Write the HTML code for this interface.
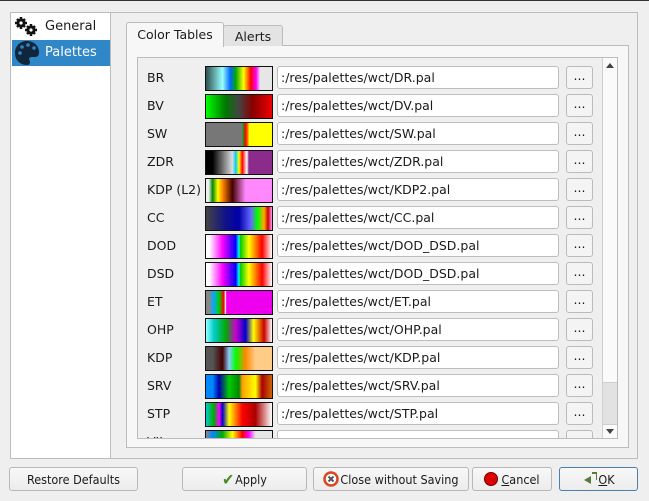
<!DOCTYPE html><html><head><style>
body{margin:0;width:649px;height:501px;background:#efefef;font-family:"DejaVu Sans","Liberation Sans",sans-serif;font-size:12.5px;color:#1a1a1a;position:relative;overflow:hidden}
.a{position:absolute;box-sizing:border-box}
.row{position:absolute;left:0;height:28px;width:470px}
.lbl{position:absolute;left:9px;top:4px}
.sw{position:absolute;left:67px;top:0;width:66px;height:23px;border:1px solid #111}
.tf{position:absolute;left:139px;top:0;width:282px;height:23px;border:1px solid #bdbdbd;border-radius:3px;background:#fff;padding:3px 0 0 3px;box-sizing:border-box}
.bt{position:absolute;left:428px;top:0;width:27px;height:23px;border:1px solid #bbb;border-radius:3px;background:#f4f4f4;text-align:center;line-height:18px;box-sizing:border-box}
.btn{position:absolute;top:467px;height:24px;border:1px solid #b8b8b8;border-radius:3px;background:linear-gradient(#f8f8f8,#ececec);box-sizing:border-box;display:flex;align-items:center;justify-content:center;white-space:nowrap;font-family:"DejaVu Sans Condensed","DejaVu Sans",sans-serif;font-size:12.5px}
</style></head><body>
<div class="a" style="left:0;top:0;width:649px;height:1px;background:#333"></div>
<div class="a" style="left:10px;top:12px;width:628px;height:447px;border:1px solid #bcbcbc"></div>
<div class="a" style="left:11px;top:13px;width:100px;height:445px;background:#fff;border-right:1px solid #bcbcbc"></div>
<div class="a" style="left:12px;top:40px;width:98px;height:26px;background:#3087c8"></div>
<svg class="a" style="left:14px;top:17px" width="26" height="20" viewBox="0 0 26 20"><g fill="#111"><circle cx="7" cy="6" r="4.5"/><circle cx="17" cy="13" r="4.5"/><g stroke="#111" stroke-width="2.5"><path d="M7 0v12M1 6h12M3 2l8 8M11 2l-8 8M17 7v12M11 13h12M13 9l8 8M21 9l-8 8"/></g></g><circle cx="7" cy="6" r="1.6" fill="#fff"/><circle cx="17" cy="13" r="1.6" fill="#fff"/></svg>
<div class="a" style="left:45px;top:19px;font-size:13px">General</div>
<svg class="a" style="left:14px;top:40px" width="26" height="26" viewBox="0 0 26 26"><path d="M13 1C6 1 1 6 1 13s5 12 12 12c2 0 3-1 3-3 0-1.5-1-2-1-3 0-1 1-2 2.5-2H21c3 0 4-2 4-5C25 6 20 1 13 1z" fill="#10263a"/><g fill="#3087c8"><circle cx="6" cy="13" r="1.8"/><circle cx="8" cy="7" r="1.8"/><circle cx="14" cy="5" r="1.8"/><circle cx="20" cy="8" r="1.8"/></g></svg>
<div class="a" style="left:45px;top:45px;font-size:13px;color:#fff">Palettes</div>
<div class="a" style="left:126px;top:45px;width:503px;height:403px;border:1px solid #bcbcbc;background:#f7f7f7"></div>
<div class="a" style="left:223px;top:25px;width:60px;height:21px;border:1px solid #bcbcbc;border-bottom:none;border-radius:3px 3px 0 0;background:#e3e3e3;text-align:center;line-height:21px">Alerts</div>
<div class="a" style="left:126px;top:22px;width:98px;height:25px;border:1px solid #bcbcbc;border-bottom:none;border-radius:3px 3px 0 0;background:#f7f7f7;text-align:center;line-height:24px">Color Tables</div>
<div class="a" style="left:137px;top:57px;width:481px;height:382px;border:1px solid #bcbcbc;background:#efefef;overflow:hidden">
<div class="a" style="left:0;top:8px;width:470px;height:380px">
<div class="row" style="top:0"><span class="lbl">BR</span><div class="sw" style="background:linear-gradient(90deg,#2f4f4f,#9ff 25%,#06f 37%,#0a0 45%,#ff0 57%,#f00 68%,#f0f 76%,#e6e6e6 82%,#e6e6e6)"></div><div class="tf">:/res/palettes/wct/DR.pal</div><div class="bt">...</div></div>
<div class="row" style="top:28px"><span class="lbl">BV</span><div class="sw" style="background:linear-gradient(90deg,#0f0,#070 30%,#444 50%,#800 70%,#e00)"></div><div class="tf">:/res/palettes/wct/DV.pal</div><div class="bt">...</div></div>
<div class="row" style="top:56px"><span class="lbl">SW</span><div class="sw" style="background:linear-gradient(90deg,#777 55%,#0a0 56%,#f00 60%,#f80 64%,#ff0 65%)"></div><div class="tf">:/res/palettes/wct/SW.pal</div><div class="bt">...</div></div>
<div class="row" style="top:84px"><span class="lbl">ZDR</span><div class="sw" style="background:linear-gradient(90deg,#000 10%,#ddd 40%,#0cf 45%,#ff0 50%,#f00 55%,#fff 62%,#8b2b8b 65%)"></div><div class="tf">:/res/palettes/wct/ZDR.pal</div><div class="bt">...</div></div>
<div class="row" style="top:112px"><span class="lbl">KDP (L2)</span><div class="sw" style="background:linear-gradient(90deg,#eee 4%,#080 10%,#ff0 18%,#f80 25%,#400 40%,#f8f 60%)"></div><div class="tf">:/res/palettes/wct/KDP2.pal</div><div class="bt">...</div></div>
<div class="row" style="top:140px"><span class="lbl">CC</span><div class="sw" style="background:linear-gradient(90deg,#444,#118 30%,#00a 50%,#66f 68%,#0f0 78%,#fa0 88%,#c00 94%,#f9f)"></div><div class="tf">:/res/palettes/wct/CC.pal</div><div class="bt">...</div></div>
<div class="row" style="top:168px"><span class="lbl">DOD</span><div class="sw" style="background:linear-gradient(90deg,#fff 5%,#f0f 25%,#00f 45%,#0ff 50%,#0c0 52%,#ff0 65%,#f00 85%,#fff)"></div><div class="tf">:/res/palettes/wct/DOD_DSD.pal</div><div class="bt">...</div></div>
<div class="row" style="top:196px"><span class="lbl">DSD</span><div class="sw" style="background:linear-gradient(90deg,#fff 5%,#f0f 25%,#00f 45%,#0ff 50%,#0c0 52%,#ff0 65%,#f00 85%,#fff)"></div><div class="tf">:/res/palettes/wct/DOD_DSD.pal</div><div class="bt">...</div></div>
<div class="row" style="top:224px"><span class="lbl">ET</span><div class="sw" style="background:linear-gradient(90deg,#888 5%,#0af 12%,#0c0 20%,#f00 27%,#fff 30%,#e0e 31%)"></div><div class="tf">:/res/palettes/wct/ET.pal</div><div class="bt">...</div></div>
<div class="row" style="top:252px"><span class="lbl">OHP</span><div class="sw" style="background:linear-gradient(90deg,#9ff,#0cc 12%,#0a0 30%,#c0c 45%,#00c 60%,#ff0 72%,#c00 88%,#fff)"></div><div class="tf">:/res/palettes/wct/OHP.pal</div><div class="bt">...</div></div>
<div class="row" style="top:280px"><span class="lbl">KDP</span><div class="sw" style="background:linear-gradient(90deg,#555 10%,#400 25%,#8cf 35%,#0f0 45%,#f80 60%,#fc8 75%)"></div><div class="tf">:/res/palettes/wct/KDP.pal</div><div class="bt">...</div></div>
<div class="row" style="top:308px"><span class="lbl">SRV</span><div class="sw" style="background:linear-gradient(90deg,#08f 10%,#00a 20%,#0c0 35%,#080 50%,#ffa000 55%,#ff0 75%,#a00 85%,#c60)"></div><div class="tf">:/res/palettes/wct/SRV.pal</div><div class="bt">...</div></div>
<div class="row" style="top:336px"><span class="lbl">STP</span><div class="sw" style="background:linear-gradient(90deg,#0cc,#0a0 12%,#f0f 20%,#00c 25%,#ff0 35%,#f00 55%,#a00 75%,#fff)"></div><div class="tf">:/res/palettes/wct/STP.pal</div><div class="bt">...</div></div>
<div class="row" style="top:364px"><span class="lbl">VIL</span><div class="sw" style="background:linear-gradient(90deg,#888,#08f 10%,#0a0 25%,#ff0 40%,#f00 55%,#f0f 65%,#e6e6e6 75%)"></div><div class="tf"></div><div class="bt">...</div></div>
</div>
<div class="a" style="left:464px;top:0;width:16px;height:380px;border-left:1px solid #cfcfcf;background:#fafafa"></div>
<div class="a" style="left:464px;top:324px;width:16px;height:43px;background:#e2e2e2;border:1px solid #cfcfcf"></div>
<div class="a" style="left:468px;top:5px;width:0;height:0;border:4px solid transparent;border-bottom:5px solid #444;border-top:none"></div>
<div class="a" style="left:468px;top:371px;width:0;height:0;border:4px solid transparent;border-top:5px solid #444;border-bottom:none"></div>
</div>
<div class="btn" style="left:9px;width:129px">Restore Defaults</div>
<div class="btn" style="left:182px;width:125px"><span style="color:#4a8a2a;font-size:16px;margin-right:1px">✔</span>Apply</div>
<div class="btn" style="left:313px;width:156px"><svg width="16" height="16" viewBox="0 0 16 16" style="margin-right:1px"><circle cx="8" cy="8" r="6.5" fill="#fff" stroke="#d42" stroke-width="2.5"/><path d="M5.5 5.5l5 5M10.5 5.5l-5 5" stroke="#555" stroke-width="2"/></svg>Close without Saving</div>
<div class="btn" style="left:472px;width:80px"><span style="display:inline-block;width:14px;height:14px;border-radius:50%;background:#d00;border:1px solid #700;margin-right:3px;box-sizing:border-box"></span><u>C</u>ancel</div>
<div class="btn" style="left:559px;width:79px;border-color:#4a7fb0"><svg width="16" height="16" viewBox="0 0 16 16"><path d="M10 1h5v8H9v4L2 9l7-4v4h5V3h-4z" fill="#5a7a3a"/></svg><u>O</u>K</div>
</body></html>
